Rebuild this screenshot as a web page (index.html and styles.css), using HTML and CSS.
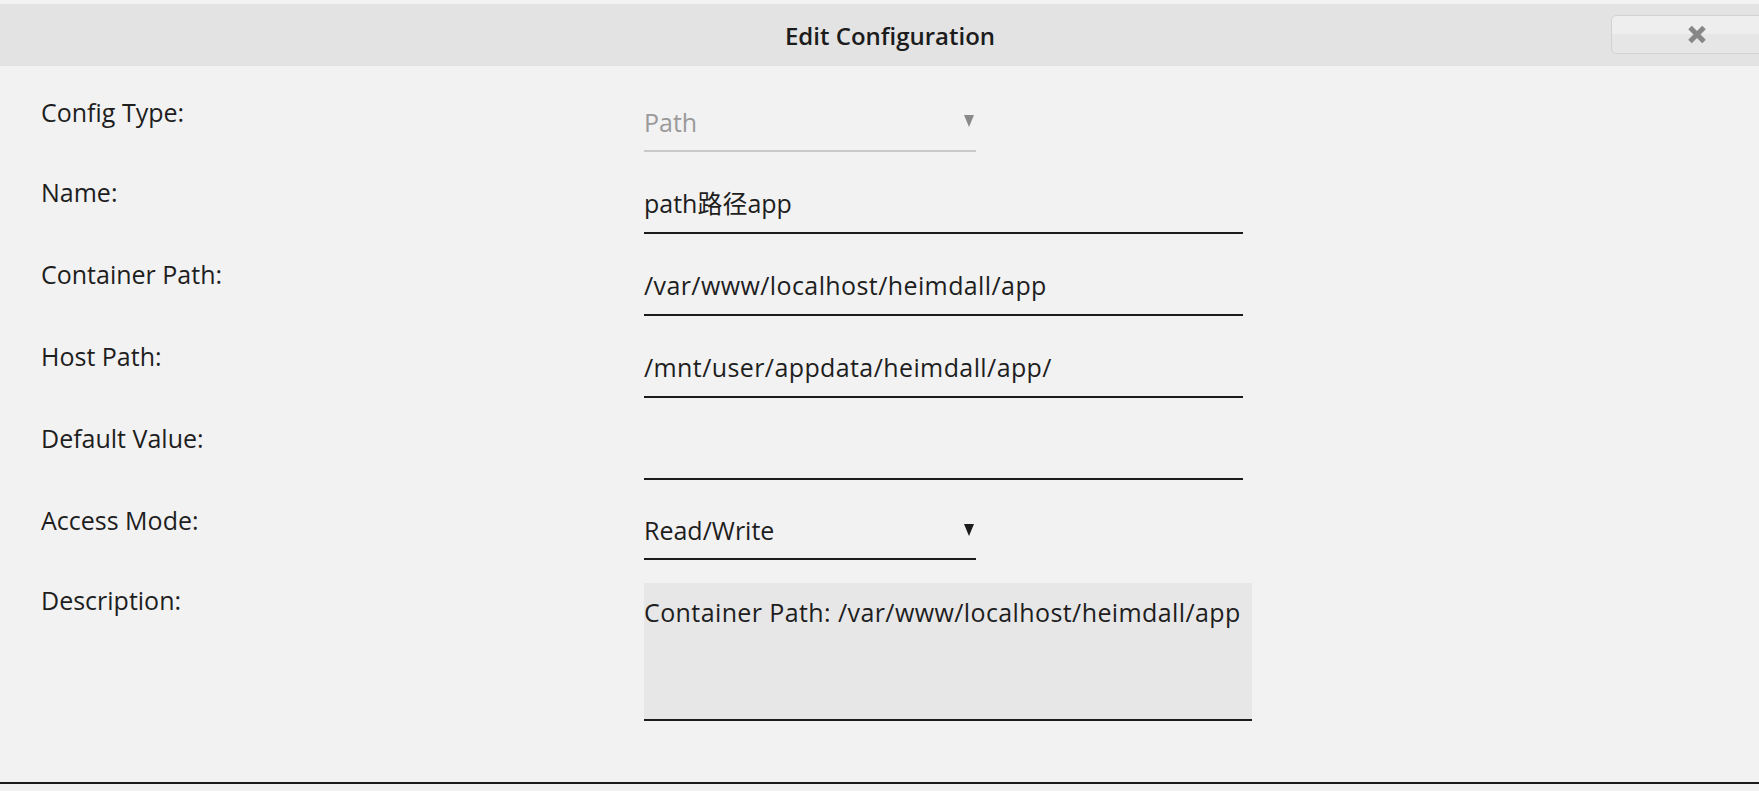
FILE: index.html
```html
<!DOCTYPE html>
<html lang="en">
<head>
<meta charset="utf-8">
<title>Edit Configuration</title>
<link rel="stylesheet" href="styles.css">
</head>
<body>
<div class="dialog">
  <div class="titlebar">
    <span class="title">Edit Configuration</span>
    <button class="close" type="button" aria-label="Close">
      <svg width="20" height="19" viewBox="0 0 20 19" aria-hidden="true">
        <path d="M3 2.5 L17 16.5 M17 2.5 L3 16.5" stroke="#878787" stroke-width="5" stroke-linecap="butt" fill="none"/>
      </svg>
    </button>
  </div>

  <div class="form">
    <div class="row row-select">
      <div class="label">Config Type:</div>
      <div class="field select disabled">
        <span>Path</span>
        <span class="arrow"></span>
      </div>
    </div>

    <div class="row">
      <div class="label">Name:</div>
      <div class="field">path路径app</div>
    </div>

    <div class="row">
      <div class="label">Container Path:</div>
      <div class="field path">/var/www/localhost/heimdall/app</div>
    </div>

    <div class="row">
      <div class="label">Host Path:</div>
      <div class="field path">/mnt/user/appdata/heimdall/app/</div>
    </div>

    <div class="row">
      <div class="label">Default Value:</div>
      <div class="field"></div>
    </div>

    <div class="row row-select">
      <div class="label">Access Mode:</div>
      <div class="field select">
        <span>Read/Write</span>
        <span class="arrow"></span>
      </div>
    </div>

    <div class="row">
      <div class="label">Description:</div>
      <div class="textarea path">Container Path: /var/www/localhost/heimdall/app</div>
    </div>
  </div>

  <div class="rule"></div>
</div>
</body>
</html>
```

FILE: styles.css
```css
html, body {
  margin: 0;
  padding: 0;
  background: #f2f2f2;
  overflow: hidden;
}

body {
  font-family: "Open Sans", "Noto Sans CJK SC", sans-serif;
  color: #1e1e1e;
}

.dialog {
  padding-top: 4px;
}

.titlebar {
  position: relative;
  height: 62px;
  background: #e3e3e3;
  display: flex;
  align-items: center;
  justify-content: center;
  padding-left: 21px;
}

.title {
  font-size: 24px;
  font-weight: 600;
  line-height: 30px;
  color: #1c1c1c;
  margin-top: 2px;
}

.close {
  position: absolute;
  top: 11px;
  right: -24px;
  width: 172px;
  height: 39px;
  box-sizing: border-box;
  border: 1px solid #d2d2d2;
  border-radius: 5px;
  background: linear-gradient(#eeeeee 0, #eeeeee 50%, #e6e6e6 50%, #e6e6e6 100%);
  display: flex;
  align-items: center;
  justify-content: center;
  padding: 0;
  margin: 0;
}

.close svg {
  display: block;
  filter: blur(0.4px);
}

.form {
  padding: 6px 0 0 41px;
}

.row {
  display: flex;
  align-items: flex-start;
  padding-top: 23px;
}

.label {
  width: 603px;
  flex: none;
  font-size: 25px;
  line-height: 34px;
  color: #1e1e1e;
}

.field {
  width: 599px;
  box-sizing: border-box;
  margin-top: 11px;
  padding-bottom: 12px;
  border-bottom: 2px solid #1c1c1c;
  font-size: 25px;
  line-height: 34px;
  height: 48px;
  color: #1e1e1e;
  white-space: nowrap;
}

.path {
  letter-spacing: 0.4px;
}

.row-select .field {
  width: 332px;
  margin-top: 10px;
  padding-bottom: 11px;
  height: 47px;
}

.select {
  display: flex;
  align-items: center;
  justify-content: space-between;
}

.arrow {
  width: 0;
  height: 0;
  border-left: 5px solid transparent;
  border-right: 5px solid transparent;
  border-top: 12px solid #1c1c1c;
  margin-right: 2px;
  margin-top: -1px;
}

.disabled {
  color: #9a9a9a;
  border-bottom-color: #c9c9c9;
}

.disabled .arrow {
  border-top-color: #8a8a8a;
  margin-top: -2px;
}

.textarea {
  width: 608px;
  height: 138px;
  box-sizing: border-box;
  padding-top: 12px;
  background: #e7e7e7;
  border-bottom: 2px solid #1c1c1c;
  font-size: 25px;
  line-height: 34px;
  color: #1e1e1e;
  white-space: nowrap;
}

.rule {
  margin-top: 61px;
  height: 2px;
  background: #1c1c1c;
}
```
